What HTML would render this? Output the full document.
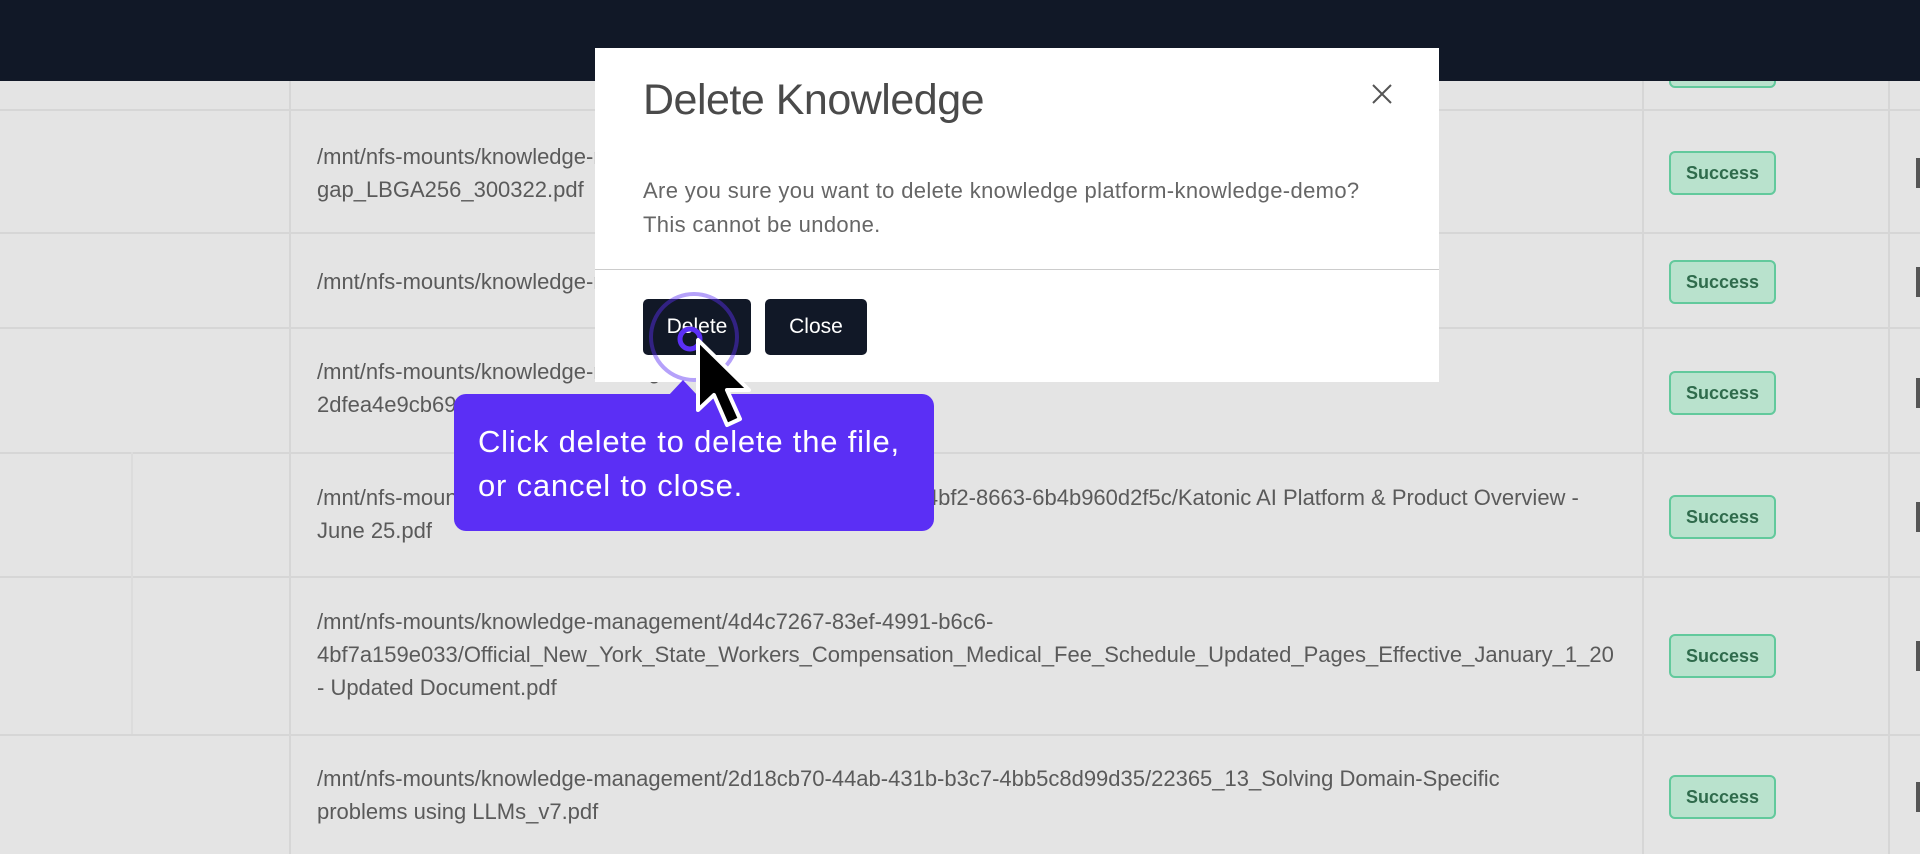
<!DOCTYPE html>
<html><head><meta charset="utf-8"><style>
*{margin:0;padding:0;box-sizing:border-box}
body{width:1920px;height:854px;overflow:hidden;background:#e4e4e4;font-family:"Liberation Sans",sans-serif;position:relative}
.hdr{position:absolute;left:0;top:0;width:1920px;height:81px;background:#111827}
.hl{position:absolute;left:0;width:1920px;height:2px;background:#d6d6d6}
.vl{position:absolute;width:2px;background:#d6d6d6}
.t{position:absolute;left:317px;font-size:22px;color:#5a5a5a;line-height:33px;white-space:nowrap;letter-spacing:0}
.b{position:absolute;left:1669px;width:107px;height:44px;background:#b9e2cd;border:2px solid #62c99c;border-radius:6px;color:#2f6b4c;font-weight:bold;font-size:18px;text-align:center;line-height:40px}
.dk{position:absolute;left:1916px;width:4px;height:30px;background:#555}
</style></head><body>
<div class="b" style="top:44px">Success</div>
<div class="hdr"></div>
<div class="hl" style="top:109px"></div>
<div class="hl" style="top:232px"></div>
<div class="hl" style="top:327px"></div>
<div class="hl" style="top:452px"></div>
<div class="hl" style="top:576px"></div>
<div class="hl" style="top:734px"></div>
<div class="vl" style="left:289px;top:81px;height:773px"></div>
<div class="vl" style="left:1642px;top:81px;height:773px"></div>
<div class="vl" style="left:1888px;top:81px;height:773px"></div>
<div class="vl" style="left:131px;top:452px;height:282px;background:#dcdcdc"></div>

<div class="t" style="top:140px">/mnt/nfs-mounts/knowledge-management/xxxxxxxx-xxxx-xxxx-xxxx-xxxxxxxxxxxx/<br>gap_LBGA256_300322.pdf</div>
<div class="t" style="top:265px">/mnt/nfs-mounts/knowledge-management/xxxxxxxx-xxxx-xxxx-xxxx-xxxxxxxxxxxx/file.pdf</div>
<div class="t" style="top:355px">/mnt/nfs-mounts/knowledge-management/xxxxxxxx-xxxx-xxxx-xxxx-<br>2dfea4e9cb69/xxxxxxxxxxxxxxxxxxxxxxxxxxxx.xlsx</div>
<div class="t" style="top:481px">/mnt/nfs-mounts/knowledge-management/xxxxxxxx-xxxx-xxxx-4bf2-8663-6b4b960d2f5c/Katonic AI Platform &amp; Product Overview -<br>June 25.pdf</div>
<div class="t" style="top:605px">/mnt/nfs-mounts/knowledge-management/4d4c7267-83ef-4991-b6c6-<br>4bf7a159e033/Official_New_York_State_Workers_Compensation_Medical_Fee_Schedule_Updated_Pages_Effective_January_1_20<br>- Updated Document.pdf</div>
<div class="t" style="top:762px">/mnt/nfs-mounts/knowledge-management/2d18cb70-44ab-431b-b3c7-4bb5c8d99d35/22365_13_Solving Domain-Specific<br>problems using LLMs_v7.pdf</div>

<div class="b" style="top:151px">Success</div>
<div class="b" style="top:260px">Success</div>
<div class="b" style="top:371px">Success</div>
<div class="b" style="top:495px">Success</div>
<div class="b" style="top:634px">Success</div>
<div class="b" style="top:775px">Success</div>
<div class="dk" style="top:158px"></div><div class="dk" style="top:267px"></div><div class="dk" style="top:378px"></div><div class="dk" style="top:502px"></div><div class="dk" style="top:641px"></div><div class="dk" style="top:782px"></div>

<!-- dialog -->
<div style="position:absolute;left:595px;top:48px;width:844px;height:334px;background:#fff">
  <div style="position:absolute;left:48px;top:28px;font-size:43px;color:#4a4a4a;letter-spacing:-0.5px">Delete Knowledge</div>
  <svg style="position:absolute;left:776px;top:35px" width="22" height="22" viewBox="0 0 22 22"><path d="M2 2L20 20M20 2L2 20" stroke="#555" stroke-width="2"/></svg>
  <div style="position:absolute;left:48px;top:126px;font-size:22px;color:#666;line-height:34px;letter-spacing:0.35px;white-space:nowrap">Are you sure you want to delete knowledge platform-knowledge-demo?<br>This cannot be undone.</div>
  <div style="position:absolute;left:0;top:221px;width:844px;height:1px;background:#ccc"></div>
  <div style="position:absolute;left:48px;top:251px;width:108px;height:56px;background:#111827;border-radius:5px;color:#fff;font-size:21px;text-align:center;line-height:56px">Delete</div>
  <div style="position:absolute;left:170px;top:251px;width:102px;height:56px;background:#111827;border-radius:5px;color:#fff;font-size:21px;text-align:center;line-height:56px">Close</div>
</div>

<!-- tooltip -->
<div style="position:absolute;left:454px;top:394px;width:480px;height:137px;background:#5b2ff5;border-radius:12px"></div>
<div style="position:absolute;left:668px;top:380px;width:0;height:0;border-left:15px solid transparent;border-right:15px solid transparent;border-bottom:16px solid #5b2ff5"></div>
<div style="position:absolute;left:478px;top:420px;font-size:31px;color:#fff;line-height:44px;white-space:nowrap;letter-spacing:0.8px">Click delete to delete the file,<br>or cancel to close.</div>

<svg style="position:absolute;left:640px;top:285px" width="130" height="150" viewBox="640 285 130 150">
  <circle cx="694" cy="337" r="43" fill="none" stroke="#5b2ff5" stroke-opacity="0.45" stroke-width="4"/>
  <circle cx="690" cy="339" r="10" fill="none" stroke="#5b2ff5" stroke-width="5"/>
  <path d="M698 340 L698 410 L714 395 L727 425 L740 419 L727 390 L749 390 Z" fill="#000" stroke="#fff" stroke-width="4" stroke-linejoin="round"/>
</svg>
</body></html>
